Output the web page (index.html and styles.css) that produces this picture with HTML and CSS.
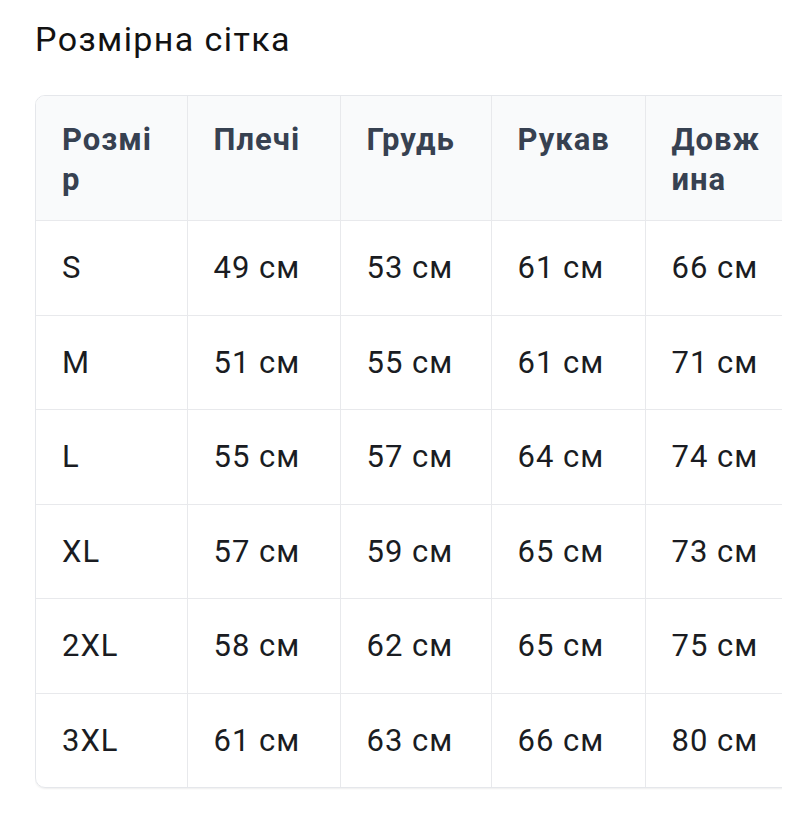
FILE: index.html
```html
<!DOCTYPE html>
<html lang="uk">
<head>
<meta charset="utf-8">
<title>Розмірна сітка</title>
<link rel="stylesheet" href="styles.css">
</head>
<body>
<div class="page">
  <h1 class="title">Розмірна сітка</h1>
  <div class="clip">
    <div class="box">
      <table class="grid">
        <colgroup>
          <col class="c1"><col class="c2"><col class="c3"><col class="c4"><col class="c5">
        </colgroup>
        <thead>
          <tr><th>Розмір</th><th>Плечі</th><th>Грудь</th><th>Рукав</th><th>Довжина</th></tr>
        </thead>
        <tbody>
          <tr><td>S</td><td>49 см</td><td>53 см</td><td>61 см</td><td>66 см</td></tr>
          <tr><td>M</td><td>51 см</td><td>55 см</td><td>61 см</td><td>71 см</td></tr>
          <tr><td>L</td><td>55 см</td><td>57 см</td><td>64 см</td><td>74 см</td></tr>
          <tr><td>XL</td><td>57 см</td><td>59 см</td><td>65 см</td><td>73 см</td></tr>
          <tr><td>2XL</td><td>58 см</td><td>62 см</td><td>65 см</td><td>75 см</td></tr>
          <tr><td>3XL</td><td>61 см</td><td>63 см</td><td>66 см</td><td>80 см</td></tr>
        </tbody>
      </table>
    </div>
  </div>
</div>
</body>
</html>
```

FILE: styles.css
```css
html, body {
  margin: 0;
  padding: 0;
  background: #ffffff;
}
.page {
  padding: 17px 0 0 35px;
  font-family: Roboto, "Noto Sans", "DejaVu Sans", sans-serif;
}
.title {
  margin: 0 0 34px 0;
  font-size: 34px;
  font-weight: 400;
  line-height: 44px;
  letter-spacing: 1.4px;
  color: #121212;
}
.clip {
  width: 747px;
  overflow: hidden;
  padding-bottom: 4px;
}
.box {
  width: 800px;
  border: 1px solid #e5e7eb;
  border-radius: 10px;
  overflow: hidden;
  box-shadow: 0 1px 2px rgba(0, 0, 0, 0.07);
}
.grid {
  border-collapse: collapse;
  table-layout: fixed;
  width: 762px;
}
.c1 { width: 151px; }
.c2 { width: 153px; }
.c3 { width: 151px; }
.c4 { width: 154px; }
.c5 { width: 153px; }
.grid th,
.grid td {
  box-sizing: border-box;
  text-align: left;
  font-size: 31px;
  line-height: 40px;
  letter-spacing: 1px;
  padding: 27px 26px 26.5px 26px;
  border-right: 1px solid #e8e9ec;
  border-bottom: 1px solid #e8e9ec;
  word-break: break-all;
  vertical-align: top;
}
.grid th {
  padding-top: 24px;
  padding-bottom: 20px;
  background: #f9fafb;
  color: #374151;
  font-weight: 700;
}
.grid td {
  color: #1a1c22;
  font-weight: 400;
}
.grid tbody tr:last-child td {
  border-bottom: none;
}
```
